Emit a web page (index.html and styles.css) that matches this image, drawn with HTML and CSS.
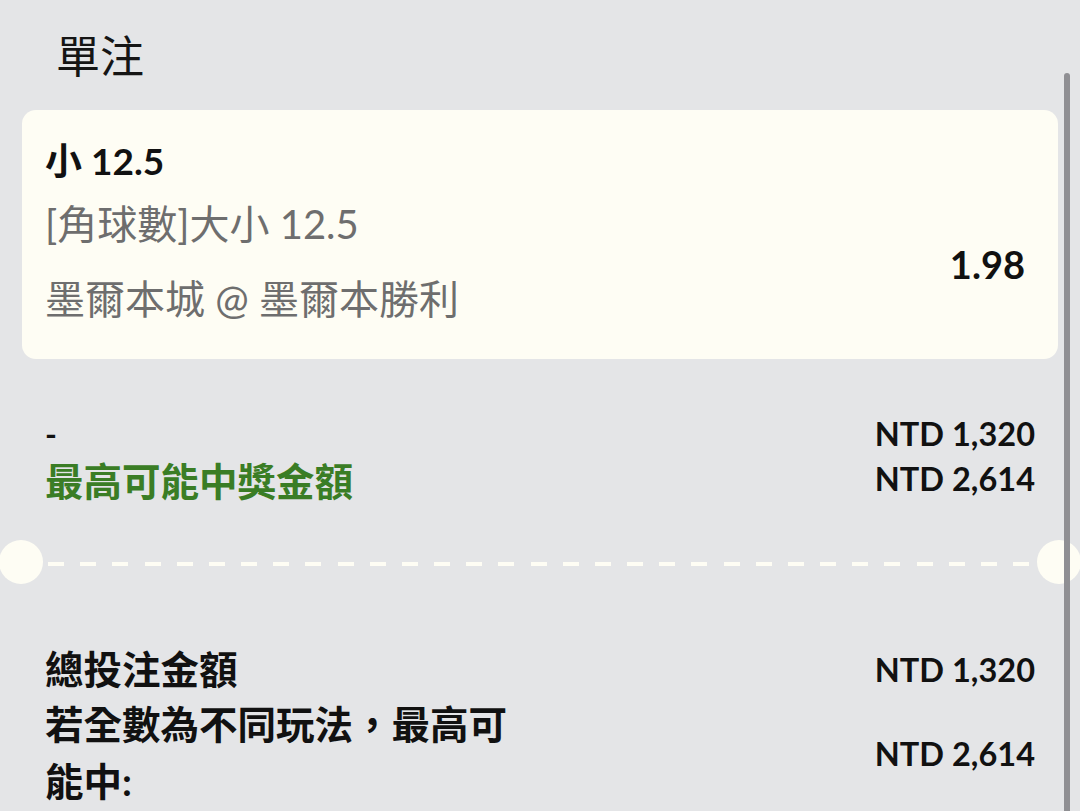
FILE: index.html
```html
<!DOCTYPE html>
<html lang="zh-Hant">
<head>
<meta charset="utf-8">
<title>單注</title>
<link rel="stylesheet" href="styles.css">
</head>
<body>
<div class="page">
  <h1 class="title">單注</h1>

  <div class="card">
    <div class="pick">小 12.5</div>
    <div class="card-body">
      <div class="card-info">
        <div class="market">[角球數]大小 12.5</div>
        <div class="match">墨爾本城 @ 墨爾本勝利</div>
      </div>
      <div class="odds">1.98</div>
    </div>
  </div>

  <div class="stake">
    <div class="stake-row">
      <span class="dash-label">-</span>
      <span class="amount">NTD 1,320</span>
    </div>
    <div class="stake-row">
      <span class="win-label">最高可能中獎金額</span>
      <span class="amount">NTD 2,614</span>
    </div>
  </div>

  <div class="divider">
    <span class="notch"></span>
    <span class="dashes"></span>
    <span class="notch"></span>
  </div>

  <div class="summary">
    <div class="sum-row">
      <span class="sum-label">總投注金額</span>
      <span class="amount">NTD 1,320</span>
    </div>
    <div class="sum-row">
      <span class="sum-label wrap">若全數為不同玩法，最高可能中:</span>
      <span class="amount">NTD 2,614</span>
    </div>
  </div>

  <div class="scrollbar"></div>
</div>
</body>
</html>
```

FILE: styles.css
```css
html, body {
  margin: 0;
  padding: 0;
  background: #e4e5e7;
}

body {
  font-family: "Lato", "Noto Sans CJK TC", sans-serif;
  color: #111111;
  overflow: hidden;
}

.page {
  position: relative;
  width: 1080px;
  height: 811px;
  overflow: hidden;
}

.title {
  margin: 0;
  padding: 28px 0 0 56px;
  font-size: 44px;
  line-height: 56px;
  font-weight: 400;
  color: #151515;
}

.card {
  margin: 26px 22px 0 22px;
  background: #fefdf4;
  border-radius: 14px;
  padding: 31px 33px 35px 23px;
}

.pick {
  font-size: 37px;
  line-height: 40px;
  font-weight: 700;
  color: #111111;
}

.card-body {
  display: flex;
  align-items: center;
  justify-content: space-between;
  margin-top: 18px;
}

.market {
  font-size: 40px;
  line-height: 50px;
  color: #6e6e6e;
}

.match {
  margin-top: 25px;
  font-size: 40px;
  line-height: 50px;
  color: #6e6e6e;
}

.odds {
  font-size: 38px;
  line-height: 50px;
  font-weight: 700;
  color: #111111;
  margin-top: 4px;
}

.stake {
  padding: 52px 45px 0 45px;
}

.stake-row {
  display: flex;
  justify-content: space-between;
  align-items: center;
  height: 45px;
}

.dash-label {
  font-size: 32px;
  font-weight: 700;
}

.win-label {
  font-size: 38.5px;
  font-weight: 700;
  color: #3a7d25;
}

.amount {
  font-size: 32.5px;
  font-weight: 700;
  color: #111111;
}

.divider {
  display: flex;
  align-items: center;
  gap: 5px;
  margin: 39px -1px 0 -1px;
  height: 44px;
}

.notch {
  flex: 0 0 44px;
  height: 44px;
  border-radius: 50%;
  background: #fefdf4;
}

.dashes {
  flex: 1;
  height: 4px;
  margin-top: 4px;
  background: repeating-linear-gradient(90deg, #fefdf4 0 16px, transparent 16px 32.17px);
}

.summary {
  padding: 60px 45px 0 45px;
}

.sum-row {
  display: flex;
  justify-content: space-between;
  align-items: center;
}

.sum-row + .sum-row {
  margin-top: 2px;
}

.sum-label {
  font-size: 38.5px;
  line-height: 50px;
  font-weight: 700;
  color: #111111;
}

.sum-label.wrap {
  max-width: 480px;
  line-height: 57px;
}

.scrollbar {
  position: absolute;
  top: 73px;
  left: 1064px;
  width: 6px;
  height: 760px;
  border-radius: 3px;
  background: #8f8f93;
}
```
